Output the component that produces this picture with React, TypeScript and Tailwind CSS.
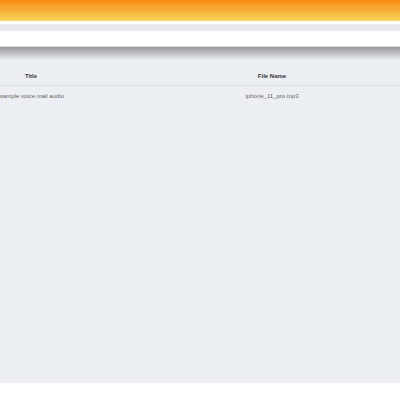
export default function App() {
  return (
    <div className="h-[400px] w-[400px] overflow-hidden bg-white font-['Liberation_Sans',Arial,sans-serif]">
      <div className="h-[383px] bg-[#ebeef3] flex flex-col">
        <div className="h-[21px] bg-gradient-to-b from-[#f38a0c] to-[#f8d35a]" />
        <div className="h-[3px] bg-white" />
        <div className="h-[7px] bg-[#e6e9ed]" />
        <div className="h-[16px] bg-white border-b border-[#d5d7da]" />
        <div className="h-[13px] bg-gradient-to-b from-[#989a9d] to-[#e9ebee]" />
        <div className="mt-[12px] overflow-hidden">
          <div className="grid grid-cols-[62px_420px] w-[482px] border-b border-[#dde0e4] pb-[4px]">
            <div className="text-center text-[6px] font-bold text-[#3a3a3a]">Title</div>
            <div className="text-center text-[6px] font-bold text-[#3a3a3a]">File Name</div>
          </div>
          <div className="grid grid-cols-[62px_420px] w-[482px] pt-[6px]">
            <div className="text-center text-[6px] text-[#666] whitespace-nowrap">sample voice mail audio</div>
            <div className="text-center text-[6px] text-[#666]">iphone_11_pro.mp3</div>
          </div>
        </div>
      </div>
    </div>
  );
}
